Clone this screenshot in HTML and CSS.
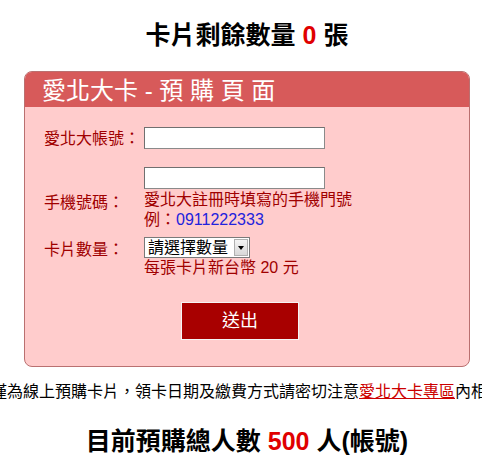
FILE: index.html
```html
<!DOCTYPE html>
<html lang="zh-Hant">
<head>
<meta charset="utf-8">
<title>愛北大卡 - 預購頁面</title>
<link rel="stylesheet" href="styles.css">
</head>
<body>
<div class="page">
  <h1 class="count-title">卡片剩餘數量 <span class="num">0</span> 張</h1>

  <div class="card">
    <div class="card-head">愛北大卡 - 預 購 頁 面</div>
    <form class="card-body">
      <div class="row">
        <label class="label label-r1">愛北大帳號：</label>
        <div class="field"><input class="text-input" type="text"></div>
      </div>
      <div class="row row-2">
        <label class="label label-r2">手機號碼：</label>
        <div class="field">
          <input class="text-input" type="text">
          <div class="hint">愛北大註冊時填寫的手機門號<br>例：<span class="blue">0911222333</span></div>
        </div>
      </div>
      <div class="row row-3">
        <label class="label label-r3">卡片數量：</label>
        <div class="field">
          <span class="select-wrap">
            <select class="select"><option>請選擇數量</option></select>
            <span class="select-arrow"></span>
          </span>
          <div class="hint">每張卡片新台幣 20 元</div>
        </div>
      </div>
      <div class="actions">
        <button class="submit" type="button">送出</button>
      </div>
    </form>
  </div>

  <div class="notice"><span class="notice-text">本站僅為線上預購卡片，領卡日期及繳費方式請密切注意<a class="link" href="#">愛北大卡專區</a>內相關公告</span></div>

  <h2 class="total">目前預購總人數 <span class="num">500</span> 人(帳號)</h2>
</div>
</body>
</html>
```

FILE: styles.css
```css
html, body {
  margin: 0;
  padding: 0;
  background: #ffffff;
  overflow: hidden;
}

body {
  font-family: "Liberation Sans", "Noto Sans CJK TC", sans-serif;
  color: #000;
}

.page {
  margin-left: 24px;
  width: 446px;
}

.count-title {
  margin: 0 0 21px;
  padding-top: 20px;
  font-size: 25px;
  line-height: 30px;
  font-weight: bold;
  text-align: center;
}

.num {
  color: #e00000;
  font-weight: bold;
}

.card {
  border: 1px solid #ba7070;
  border-radius: 8px;
  background: #ffcccc;
  overflow: hidden;
}

.card-head {
  height: 32px;
  padding: 3px 0 0 17px;
  background: #d75a5a;
  color: #ffffff;
  font-size: 24px;
  line-height: 32px;
}

.card-body {
  display: flex;
  flex-direction: column;
  padding: 20px 0 26px 19px;
  margin: 0;
}

.row {
  display: flex;
  align-items: flex-start;
}

.row-2 {
  margin-top: 18px;
}

.row-3 {
  margin-top: 7px;
}

.label {
  width: 100px;
  flex: none;
  color: #a00000;
  font-size: 16px;
  line-height: 20px;
}

.label-r1 { margin-top: 2px; }
.label-r2 { margin-top: 26px; }
.label-r3 { margin-top: 3px; }

.field {
  display: flex;
  flex-direction: column;
  align-items: flex-start;
}

.text-input {
  box-sizing: border-box;
  width: 181px;
  height: 22px;
  margin: 0;
  padding: 0 2px;
  border: 1px solid #8a8a8a;
  border-top-color: #707070;
  border-left-color: #707070;
  background: #ffffff;
  font-size: 14px;
}

.hint {
  margin-top: 1px;
  color: #a00000;
  font-size: 16px;
  line-height: 20px;
}

.row-3 .hint {
  margin-top: 0;
}

.blue {
  color: #2222dd;
}

.select-wrap {
  position: relative;
  display: inline-block;
  height: 21px;
}

.select {
  box-sizing: border-box;
  width: 106px;
  height: 21px;
  margin: 0;
  padding: 0 18px 0 3px;
  border: 1px solid #7a7a7a;
  border-radius: 0;
  background: #ffffff;
  appearance: none;
  -webkit-appearance: none;
  font-family: "Liberation Sans", "Noto Sans CJK TC", sans-serif;
  font-size: 16px;
  line-height: 19px;
  color: #000;
}

.select-arrow {
  position: absolute;
  top: 2px;
  right: 2px;
  width: 14px;
  height: 17px;
  box-sizing: border-box;
  border: 1px solid #b0b0b0;
  background: linear-gradient(#f4f4f4, #d8d8d8);
  pointer-events: none;
}

.select-arrow::after {
  content: "";
  position: absolute;
  left: 3px;
  top: 6px;
  border-left: 3px solid transparent;
  border-right: 3px solid transparent;
  border-top: 4px solid #000;
}

.actions {
  display: flex;
  margin-top: 24px;
  padding-left: 137px;
}

.submit {
  box-sizing: border-box;
  width: 118px;
  height: 38px;
  margin: 0;
  border: 1px solid #f4f4f4;
  background: #a80000;
  color: #ffffff;
  font-family: "Liberation Sans", "Noto Sans CJK TC", sans-serif;
  font-size: 18px;
  line-height: 20px;
  cursor: pointer;
}

.notice {
  display: flex;
  justify-content: center;
  margin-top: 15px;
  font-size: 16px;
  line-height: 20px;
  white-space: nowrap;
}

.notice-text {
  flex: none;
}

.link {
  color: #cc0000;
  text-decoration: underline;
}

.total {
  margin: 24px 0 0;
  font-size: 25px;
  line-height: 30px;
  font-weight: bold;
  text-align: center;
}
```
